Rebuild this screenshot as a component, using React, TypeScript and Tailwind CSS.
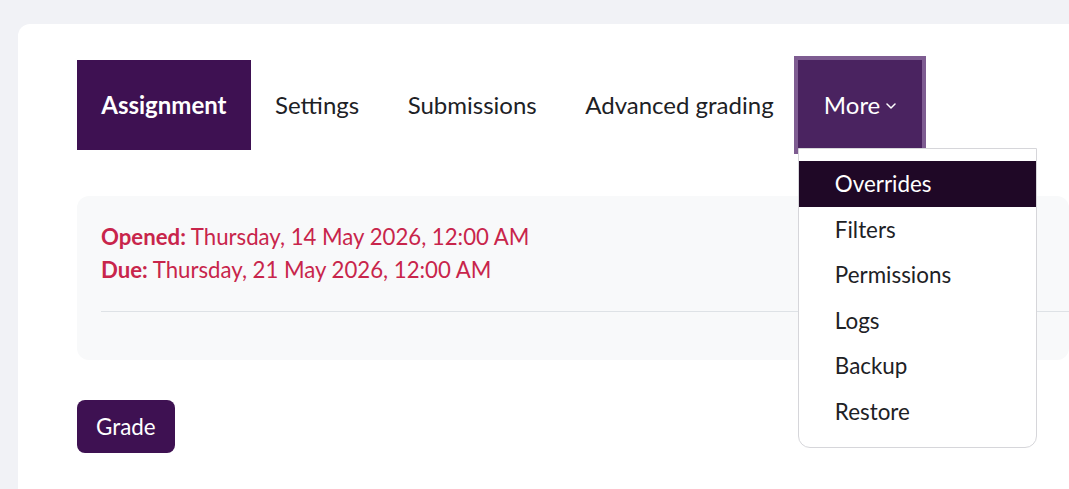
import React from "react";

const tabs = ["Settings", "Submissions", "Advanced grading"];
const moreItems = ["Overrides", "Filters", "Permissions", "Logs", "Backup", "Restore"];

function Chevron() {
  return (
    <svg width="10" height="10" viewBox="0 0 10 10" fill="none" className="ml-[6px] mt-[1px]">
      <path d="M1 3l4 4 4-4" stroke="currentColor" strokeWidth="1.5" strokeLinecap="round" strokeLinejoin="round" />
    </svg>
  );
}

export default function App() {
  return (
    <div
      className="min-h-[489px] overflow-hidden bg-[#f1f2f6] pt-[24px] pl-[18px] text-[#1d2125]"
      style={{ fontFamily: "Lato, 'Open Sans', sans-serif" }}
    >
      <div className="mr-[-40px] min-h-[465px] rounded-tl-[12px] bg-white pt-[36px] pl-[59px] pr-[40px]">
        {/* secondary navigation */}
        <nav className="flex h-[90px] items-stretch text-[24px]">
          <a className="flex items-center bg-[#3e1152] px-[24.25px] font-bold text-white">Assignment</a>
          {tabs.map((t) => (
            <a key={t} className="flex items-center px-[24.25px]">
              {t}
            </a>
          ))}
          <div className="relative flex">
            <button className="flex items-center bg-[#4a2360] px-[26px] text-white outline-[4.5px] outline-solid outline-[#7e5c91]">
              More
              <Chevron />
            </button>
            <ul className="absolute left-0 top-[calc(100%-2px)] z-10 w-[239px] rounded-b-[12px] border border-[#d6d6da] bg-white py-[12px] text-[22.4px]">
              {moreItems.map((item, i) => (
                <li
                  key={item}
                  className={
                    i === 0
                      ? "flex h-[45.6px] items-center bg-[#1f0826] pl-[36px] text-white"
                      : "flex h-[45.6px] items-center pl-[36px]"
                  }
                >
                  {item}
                </li>
              ))}
            </ul>
          </div>
        </nav>

        {/* dates */}
        <div className="mt-[46px] h-[164px] rounded-[12px] bg-[#f8f9fa] pt-[24px] pl-[24px] text-[22.2px] leading-[33px] text-[#c8254b]">
          <div>
            <strong className="font-bold">Opened:</strong> Thursday, 14 May 2026, 12:00 AM
          </div>
          <div>
            <strong className="font-bold">Due:</strong> Thursday, 21 May 2026, 12:00 AM
          </div>
          <hr className="mt-[25px] border-t border-[#dee2e6]" />
        </div>

        <button className="mt-[40px] h-[53px] rounded-[8px] bg-[#3e1152] px-[19px] text-[22.4px] text-white">
          Grade
        </button>
      </div>
    </div>
  );
}
